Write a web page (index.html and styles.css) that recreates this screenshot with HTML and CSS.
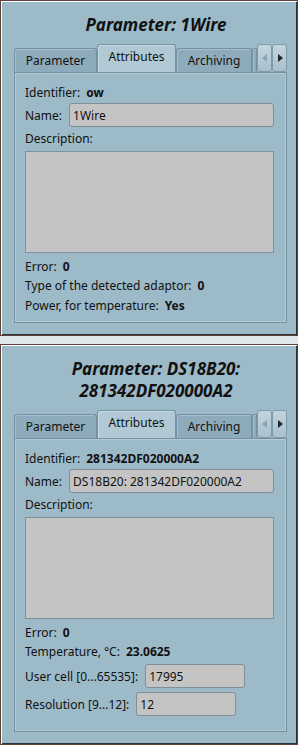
FILE: index.html
```html
<!DOCTYPE html>
<html lang="en">

<head>
    <meta charset="UTF-8">
    <meta name="viewport" content="width=device-width, initial-scale=1.0">
    <title>Parameters</title>
    <link rel="stylesheet" href="styles.css">
</head>

<body>

<div class="panel">
    <h2 class="title">Parameter: 1Wire</h2>
    <div class="tabs">
        <div class="tab">Parameter</div>
        <div class="tab active">Attributes</div>
        <div class="tab">Archiving</div>
        <div class="tab stub"></div>
        <div class="arrow-btn disabled">
            <svg width="6" height="8" viewBox="0 0 6 8"><path d="M5 0 L0 4 L5 8 Z"/></svg>
        </div>
        <div class="arrow-btn">
            <svg width="6" height="8" viewBox="0 0 6 8"><path d="M1 0 L6 4 L1 8 Z"/></svg>
        </div>
    </div>
    <div class="pane">
        <div class="row"><span class="lbl">Identifier:</span><b>ow</b></div>
        <div class="row field"><span class="lbl">Name:</span><div class="input wide">1Wire</div></div>
        <div class="row"><span class="lbl">Description:</span></div>
        <div class="textarea"></div>
        <div class="row first-info"><span class="lbl">Error:</span><b>0</b></div>
        <div class="row tight"><span class="lbl">Type of the detected adaptor:</span><b>0</b></div>
        <div class="row"><span class="lbl">Power, for temperature:</span><b>Yes</b></div>
    </div>
</div>

<div class="panel">
    <h2 class="title">Parameter: DS18B20:<br>281342DF020000A2</h2>
    <div class="tabs">
        <div class="tab">Parameter</div>
        <div class="tab active">Attributes</div>
        <div class="tab">Archiving</div>
        <div class="tab stub"></div>
        <div class="arrow-btn disabled">
            <svg width="6" height="8" viewBox="0 0 6 8"><path d="M5 0 L0 4 L5 8 Z"/></svg>
        </div>
        <div class="arrow-btn">
            <svg width="6" height="8" viewBox="0 0 6 8"><path d="M1 0 L6 4 L1 8 Z"/></svg>
        </div>
    </div>
    <div class="pane pane-long">
        <div class="row"><span class="lbl">Identifier:</span><b>281342DF020000A2</b></div>
        <div class="row field"><span class="lbl">Name:</span><div class="input wide">DS18B20: 281342DF020000A2</div></div>
        <div class="row"><span class="lbl">Description:</span></div>
        <div class="textarea"></div>
        <div class="row first-info"><span class="lbl">Error:</span><b>0</b></div>
        <div class="row tight"><span class="lbl">Temperature, °C:</span><b>23.0625</b></div>
        <div class="row field spaced"><span class="lbl">User cell [0...65535]:</span><div class="input small">17995</div></div>
        <div class="row field spaced"><span class="lbl">Resolution [9...12]:</span><div class="input small">12</div></div>
    </div>
</div>

</body>
</html>
```

FILE: styles.css
```css
body {
    margin: 0;
    background-color: #dfe7eb;
    font-family: "Noto Sans", "Open Sans", sans-serif;
    font-size: 12px;
    color: #111;
}

.panel {
    background-color: #9dbac9;
    border: 1px solid #5e4137;
    box-shadow: inset 1px 1px 0 #fff, inset -1px -1px 0 #25343c;
    padding: 13px 0 12px;
}

.panel + .panel {
    margin-top: 8px;
}

.title {
    margin: 0;
    padding-left: 14px;
    text-align: center;
    font-size: 17px;
    font-style: italic;
    font-weight: bold;
    line-height: 22px;
    color: #111;
}

/* tab bar */
.tabs {
    display: flex;
    align-items: flex-end;
    height: 28px;
    margin: 8px 10px 0 13px;
}

.tab {
    box-sizing: border-box;
    height: 24px;
    background-color: #8eabbb;
    border: 1px solid #7592a2;
    border-bottom: none;
    border-radius: 3px 3px 0 0;
    display: flex;
    align-items: center;
    justify-content: center;
    box-shadow: inset 1px 1px 0 #a6bfcc;
}

.tab:nth-child(1) { width: 83px; }
.tab:nth-child(2) { width: 79px; }
.tab:nth-child(3) { width: 76px; }

.tab.active {
    height: 28px;
    background-color: #b1c9d5;
    padding-bottom: 4px;
    box-shadow: inset 1px 1px 0 #c9dbe3;
}

.tab.stub {
    width: 5px;
    border-radius: 0;
}

.arrow-btn {
    box-sizing: border-box;
    width: 15px;
    height: 28px;
    align-self: flex-start;
    background: linear-gradient(#c3d5de, #a9c1ce);
    border: 1px solid #7f9aa8;
    border-radius: 3px;
    display: flex;
    align-items: center;
    justify-content: center;
}

.arrow-btn svg {
    fill: #1d2830;
}

.arrow-btn.disabled svg {
    fill: #8ea3ae;
}

/* tab content */
.pane {
    margin: 0 10px 0 13px;
    border: 1px solid #7491a0;
    box-shadow: inset 0 0 0 1px #b6cad4;
    padding: 10px 11px 8px 10px;
    display: flex;
    flex-direction: column;
}

.pane-long {
    padding-bottom: 15px;
}

.row {
    display: flex;
    align-items: center;
    height: 18px;
    margin-top: 2px;
    white-space: nowrap;
}

.pane .row:first-child {
    margin-top: 0;
}

.row.field {
    height: 24px;
}

.row.first-info {
    margin-top: 4px;
}

.row.tight {
    margin-top: 1px;
}

.row.spaced {
    margin-top: 4px;
}

.lbl {
    margin-right: 6px;
}

.input {
    box-sizing: border-box;
    height: 24px;
    background-color: #c4c4c4;
    border: 1px solid #7f8e97;
    border-radius: 3px;
    padding-left: 3px;
    display: flex;
    align-items: center;
    margin-left: 1px;
}

.input.wide {
    flex: 1;
    margin-right: 1px;
}

.input.small {
    width: 100px;
}

.textarea {
    box-sizing: border-box;
    height: 102px;
    margin-top: 4px;
    margin-right: 1px;
    background-color: #c4c4c4;
    border: 1px solid #7f939e;
}
```
